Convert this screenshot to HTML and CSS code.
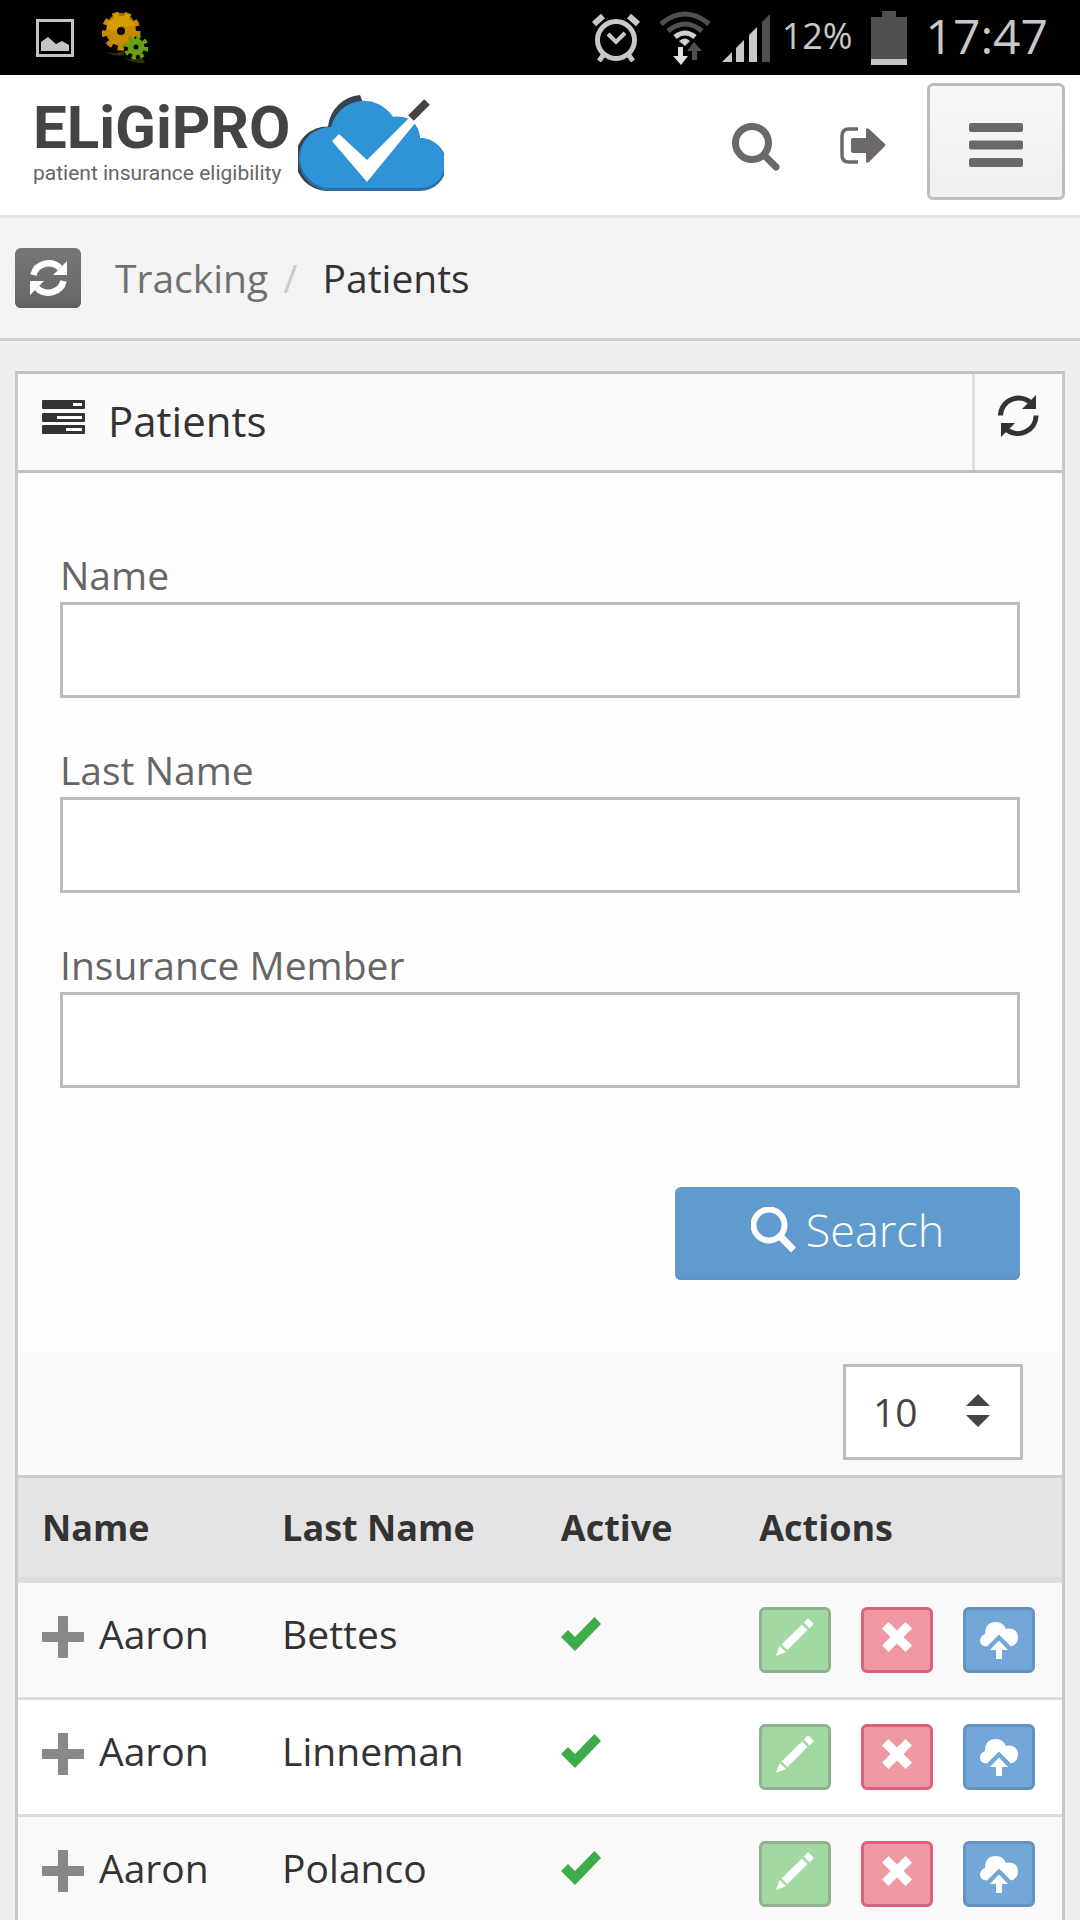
FILE: index.html
```html
<!DOCTYPE html>
<html lang="en">
<head>
<meta charset="utf-8">
<meta name="viewport" content="width=device-width, initial-scale=1">
<title>Patients - EligiPro</title>
<link rel="stylesheet" href="styles.css">
</head>
<body>
<svg class="sprite" aria-hidden="true">
  <symbol id="i-plus" viewBox="0 0 42 48"><path d="M17 6h8q1 0 1 1v15h15q1 0 1 1v8q0 1-1 1H26v15q0 1-1 1h-8q-1 0-1-1V32H1q-1 0-1-1v-8q0-1 1-1h15V7q0-1 1-1z"/></symbol>
  <symbol id="i-check" viewBox="0 0 41 34"><path d="M0 20l7-7 7 7L33.500 0 40 7 14 34z"/></symbol>
  <symbol id="i-pencil" viewBox="0 0 38 38"><path d="M0 38l3.500-10 6.500 6zM5.500 26.500L26 6.500 31.500 12 11.500 32zM28 4.500l3-3.500q1-1 2 0l4 4q1 1 0 2l-3.500 3.500z"/></symbol>
  <symbol id="i-cross" viewBox="0 0 30 30"><path d="M6.500 0L15 8.500 23.500 0 30 6.500 21.500 15 30 23.500 23.500 30 15 21.500 6.500 30 0 23.500 8.500 15 0 6.500z"/></symbol>
  <symbol id="i-upload" viewBox="0 0 38 37"><path d="M7 24.500l12-12 12 12q7-2 7-9 0-9-10-9-1 0-2 .5Q23 0 16 0 5 0 5 12 0 14 0 19q0 5 7 5.500z"/><path d="M19 18.500l9 9.500h-6v9h-6v-9h-6z"/></symbol>
</svg>

<div class="statusbar">
  <div class="statusbar-side">
    <svg width="38" height="38" viewBox="0 0 38 38"><path d="M1.500 1.500h35v35h-35z" fill="none" stroke="#c4c4c4" stroke-width="3"/><path d="M5 32v-9l7-5 8 7 6-3 7 4v6z" fill="#c4c4c4"/></svg>
    <svg width="46" height="54" viewBox="0 0 46 54">
      <path d="M4 41q12 3 18-2v5q-8 2-18-3zM22 47q12 3 18-1l3 6q-10 1-21-5z" fill="#2e3400"/>
      <g fill="none" stroke="#c98a00"><circle cx="19" cy="20" r="9.500" stroke-width="11"/><circle cx="19" cy="20" r="16.500" stroke-width="6" stroke-dasharray="6 5.520"/></g>
      <path d="M5 18a14 14 0 0 1 28-4l-10 2a6 6 0 0 0-9 4z" fill="#dca800" opacity=".7"/>
      <g fill="none" stroke="#6b9e12"><circle cx="34" cy="36" r="5.500" stroke-width="6"/><circle cx="34" cy="36" r="10" stroke-width="5" stroke-dasharray="4 3.850"/></g>
    </svg>
  </div>
  <div class="statusbar-side">
    <svg width="56" height="48" viewBox="0 0 56 48" fill="none" stroke="#c8c8c8"><circle cx="24" cy="26" r="18.500" stroke-width="5"/><path d="M16 20l8 8 9-9" stroke-width="4"/><path d="M2 10L11 2M46 10L37 2" stroke-width="6"/><path d="M7 47l5-7M41 47l-5-7" stroke-width="5"/></svg>
    <svg width="50" height="54" viewBox="0 0 50 54" fill="none"><path d="M1 13q24-20 48 0M8 20q17-14 34 0" stroke="#505050" stroke-width="5"/><path d="M15 26q10-8 20 0" stroke="#d0d0d0" stroke-width="5"/><path d="M19 30q6-5 11 0l-5 5z" fill="#d0d0d0"/><path d="M34 31l8 9h-5v9h-5v-9h-5z" fill="#505050"/><path d="M18 36h5v9h5l-7 9-8-9h5z" fill="#e0e0e0"/></svg>
    <svg width="48" height="48" viewBox="0 0 48 48"><path d="M0 48l10-10v10zM14 34l8-8v22h-8zM27 21l8-8v35h-8z" fill="#c8c8c8"/><path d="M40 8l8-8v48h-8z" fill="#505050"/></svg>
    <span class="battery-level">12%</span>
    <svg width="40" height="54" viewBox="0 0 40 54"><path d="M3 6h11V0h14v6h11v42H3z" fill="#505050"/><path d="M3 48h36v6H3z" fill="#c4c4c4"/></svg>
    <span class="clock">17:47</span>
  </div>
</div>

<header class="topbar">
  <a class="logo" href="#">
    <span class="logo-text"><span class="logo-name">ELiGiPRO</span><span class="logo-tag">patient insurance eligibility</span></span>
    <svg width="146" height="97" viewBox="0 0 146 97">
      <path d="M29 96A31 31 0 0 1 30 31.500 35 35 0 0 1 62 0L100 96z" fill="#35434e"/>
      <path d="M32 96A31 31 0 0 1 33 32 35 35 0 0 1 95 22Q119 20 122 43A26 26 0 0 1 122 96z" fill="#2c6fa6"/>
      <path d="M32 93A30 30 0 0 1 33 32 34 34 0 0 1 95 22Q119 20 122 43A25 25 0 0 1 122 93z" fill="#2f94d6"/>
      <path d="M34 46l7-7 28 26 43-43 6 5-49 60z" fill="#fff"/>
      <path d="M113 23L129 7" stroke="#4a4040" stroke-width="8"/>
    </svg>
  </a>
  <nav class="topbar-actions">
    <a class="find-link" href="#" aria-label="Search"><svg width="48" height="48" viewBox="0 0 48 48" fill="none" stroke="#6c6868"><circle cx="20" cy="20" r="16.500" stroke-width="7"/><path d="M32 32l12 12" stroke-width="7" stroke-linecap="round"/></svg></a>
    <a class="exit-link" href="#" aria-label="Sign out"><svg width="46" height="38" viewBox="0 0 46 38"><path d="M18 2H9q-7 0-7 7v19q0 7 7 7h9" fill="none" stroke="#6c6868" stroke-width="3.500"/><path d="M13 11h13V3q0-3 3-1l16 15q1 1 0 2L29 35q-3 2-3-1v-8H13q-2 0-2-2V13q0-2 2-2z" fill="#6c6868"/></svg></a>
    <button class="menu-btn" type="button" aria-label="Menu"><svg width="54" height="44" viewBox="0 0 54 44" fill="#6c6868"><rect width="54" height="9" rx="2"/><rect y="17.500" width="54" height="9" rx="2"/><rect y="35" width="54" height="9" rx="2"/></svg></button>
  </nav>
</header>

<div class="ribbon">
  <button class="reset-btn" type="button" aria-label="Reset"><svg width="37" height="38" viewBox="0 0 37 38"><path d="M3.500 16A15.500 14.500 0 0 1 30 9M33.500 22A15.500 14.500 0 0 1 7 29" fill="none" stroke="#fff" stroke-width="6.500"/><path d="M37 2v14H23zM0 36V22h14z" fill="#fff"/></svg></button>
  <nav class="breadcrumb" aria-label="Breadcrumb">
    <a href="#">Tracking</a><span class="slash">/</span><span>Patients</span>
  </nav>
</div>

<main class="content">
  <section class="panel">
    <div class="panel-head">
      <svg width="43" height="44" viewBox="0 0 43 44"><g fill="#333"><rect width="43" height="9" rx="1"/><rect y="13" width="43" height="9" rx="1"/><rect y="25" width="43" height="9" rx="1"/></g><path d="M31 3h9v3h-9zM15 16h25v3H15zM24 28h16v3H24z" fill="#fff"/></svg>
      <h1 class="panel-title">Patients</h1>
      <button class="panel-refresh" type="button" aria-label="Refresh"><svg width="41" height="54" viewBox="0 0 41 54"><path d="M2.500 20.500A18 17.500 0 0 1 33 8M38 20.500A18 17.500 0 0 1 8 34" fill="none" stroke="#333" stroke-width="5"/><path d="M38 0v14H24zM3 42V28h14z" fill="#333"/></svg></button>
    </div>

    <form class="filters">
      <div class="field"><label for="name">Name</label><input id="name" type="text"></div>
      <div class="field"><label for="last-name">Last Name</label><input id="last-name" type="text"></div>
      <div class="field"><label for="member">Insurance Member</label><input id="member" type="text"></div>
      <button class="search-btn" type="button"><svg width="45" height="46" viewBox="0 0 45 46" fill="none" stroke="#fff"><circle cx="18" cy="18" r="15.500" stroke-width="6"/><path d="M29 29l13.500 14" stroke-width="7"/></svg>Search</button>
    </form>

    <div class="toolbar">
      <div class="page-size">
        <select aria-label="Rows per page"><option>10</option><option>25</option><option>50</option></select>
        <svg class="page-size-arrows" width="24" height="33" viewBox="0 0 24 33" fill="#444"><path d="M12 0l12 12H0zM12 33L0 21h24z"/></svg>
      </div>
    </div>

    <table class="patients">
      <colgroup><col class="col-name"><col class="col-last"><col class="col-active"><col></colgroup>
      <thead><tr><th scope="col">Name</th><th scope="col">Last Name</th><th scope="col">Active</th><th scope="col">Actions</th></tr></thead>
      <tbody>
        <tr>
          <td><div class="cell"><svg class="plus"><use href="#i-plus"/></svg>Aaron</div></td>
          <td>Bettes</td>
          <td><div class="cell"><svg class="check"><use href="#i-check"/></svg></div></td>
          <td><div class="actions">
            <button class="act edit" type="button" aria-label="Edit"><svg width="38" height="38"><use href="#i-pencil"/></svg></button>
            <button class="act remove" type="button" aria-label="Delete"><svg width="30" height="30"><use href="#i-cross"/></svg></button>
            <button class="act upload" type="button" aria-label="Upload"><svg width="38" height="37"><use href="#i-upload"/></svg></button>
          </div></td>
        </tr>
        <tr>
          <td><div class="cell"><svg class="plus"><use href="#i-plus"/></svg>Aaron</div></td>
          <td>Linneman</td>
          <td><div class="cell"><svg class="check"><use href="#i-check"/></svg></div></td>
          <td><div class="actions">
            <button class="act edit" type="button" aria-label="Edit"><svg width="38" height="38"><use href="#i-pencil"/></svg></button>
            <button class="act remove" type="button" aria-label="Delete"><svg width="30" height="30"><use href="#i-cross"/></svg></button>
            <button class="act upload" type="button" aria-label="Upload"><svg width="38" height="37"><use href="#i-upload"/></svg></button>
          </div></td>
        </tr>
        <tr>
          <td><div class="cell"><svg class="plus"><use href="#i-plus"/></svg>Aaron</div></td>
          <td>Polanco</td>
          <td><div class="cell"><svg class="check"><use href="#i-check"/></svg></div></td>
          <td><div class="actions">
            <button class="act edit" type="button" aria-label="Edit"><svg width="38" height="38"><use href="#i-pencil"/></svg></button>
            <button class="act remove" type="button" aria-label="Delete"><svg width="30" height="30"><use href="#i-cross"/></svg></button>
            <button class="act upload" type="button" aria-label="Upload"><svg width="38" height="37"><use href="#i-upload"/></svg></button>
          </div></td>
        </tr>
      </tbody>
    </table>
  </section>
</main>
</body>
</html>
```
FILE: styles.css
```css
* { box-sizing: border-box; }

body {
  margin: 0;
  background: #efefef;
  color: #333;
  font-family: "Open Sans", "Noto Sans", sans-serif;
  font-size: 39px;
  line-height: 54px;
}

button, input, select { font: inherit; color: inherit; margin: 0; }
button { cursor: pointer; padding: 0; }
a { color: inherit; text-decoration: none; }
svg { display: block; flex: none; }
.sprite { position: absolute; width: 0; height: 0; }

/* Device status bar */
.statusbar {
  display: flex;
  justify-content: space-between;
  height: 75px;
  padding: 0 32px 0 36px;
  background: #000;
  color: #c8c8c8;
}
.statusbar-side { display: flex; align-items: center; gap: 12px; }
.statusbar-side:first-child { gap: 28px; }
.battery-level { padding: 0 3px 3px 0; font-size: 36px; }
.clock { padding: 0 0 3px 6px; font-size: 48px; }

/* Header */
.topbar {
  display: flex;
  justify-content: space-between;
  align-items: center;
  height: 143px;
  padding: 0 15px 0 33px;
  background: #fff;
  border-bottom: 3px solid #e5e5e5;
}
.logo { display: flex; align-items: center; gap: 11px; margin-bottom: 4px; color: #444; }
.logo-text { display: flex; flex-direction: column; width: 254px; white-space: nowrap; font-family: Roboto, "Open Sans", sans-serif; }
.logo-name { font-size: 60px; line-height: 60px; font-weight: 700; }
.logo-tag { font-size: 21px; line-height: 30px; color: #666; }
.topbar-actions { display: flex; align-items: center; }
.find-link { margin-right: 60px; padding-top: 4px; }
.exit-link { margin-right: 41px; padding-top: 2px; }
.menu-btn {
  display: grid;
  place-items: center;
  width: 138px;
  height: 117px;
  margin-bottom: 7px;
  padding-top: 7px;
  border: 3px solid #bdbdbd;
  border-radius: 6px;
  background: linear-gradient(#f8f8f8, #f0f0f0);
}

/* Ribbon */
.ribbon {
  display: flex;
  align-items: center;
  gap: 34px;
  height: 123px;
  padding: 0 15px;
  background: #f4f4f4;
  border-bottom: 3px solid #cfcfcf;
}
.reset-btn {
  display: grid;
  place-items: center;
  width: 66px;
  height: 60px;
  border: 0;
  border-radius: 6px;
  background: linear-gradient(#777, #666);
  box-shadow: inset 0 -6px 3px -2px #5f5f5f;
}
.breadcrumb { display: flex; }
.breadcrumb a { color: #707070; }
.slash { color: #ccc; padding: 0 25px 0 15px; }

/* Panel */
.content { padding: 30px 15px; }
.panel { border: 3px solid #c9c9c9; border-top-color: #c0c0c0; background: #fefefe; }
.panel-head {
  display: flex;
  align-items: center;
  height: 99px;
  padding-left: 24px;
  background: #fafafa;
  border-bottom: 3px solid #c0c0c0;
}
.panel-title { flex: 1; margin: 0; padding: 0 0 2px 23px; font-size: 42px; font-weight: 400; }
.panel-refresh {
  display: grid;
  place-items: center;
  align-self: stretch;
  width: 90px;
  border: 0;
  border-left: 3px solid #e0e0e0;
  background: none;
}

/* Filter form */
.filters { display: flex; flex-direction: column; gap: 45px; padding: 75px 42px 72px; }
.field { display: flex; flex-direction: column; }
.field label { color: #666; }
.field input {
  width: 100%;
  height: 96px;
  padding: 0 24px;
  border: 3px solid #bdbdbd;
  border-radius: 0;
  background: #fff;
}
.search-btn {
  display: flex;
  align-items: center;
  justify-content: center;
  align-self: flex-end;
  gap: 10px;
  width: 345px;
  height: 93px;
  margin-top: 54px;
  padding-bottom: 8px;
  border: 0;
  border-radius: 6px;
  background: #5f9bcf;
  box-shadow: inset 0 -6px 3px -2px #5a94c8;
  color: #fff;
  font-size: 45px;
  font-weight: 300;
}

/* Table */
.toolbar { display: flex; justify-content: flex-end; padding: 12px 39px 15px; background: #fafafa; }
.page-size { position: relative; }
.page-size select {
  display: block;
  width: 180px;
  height: 96px;
  padding: 0 27px;
  border: 3px solid #bdbdbd;
  border-radius: 0;
  background: #fff;
  color: #444;
  appearance: none;
}
.page-size-arrows { position: absolute; top: 30px; right: 33px; pointer-events: none; }

.patients { width: 100%; table-layout: fixed; border-collapse: separate; border-spacing: 0; border-top: 3px solid #ccc; }
.col-name { width: 23%; }
.col-last { width: 26.7%; }
.col-active { width: 19%; }
.patients th {
  height: 105px;
  padding: 0 0 0 24px;
  background: #e4e4e4;
  border-bottom: 6px solid #dcdcdc;
  font-size: 36px;
  font-weight: 700;
  text-align: left;
}
.patients td { padding: 24px 0 24px 24px; border-bottom: 3px solid #dcdcdc; background: #fff; vertical-align: top; }
.patients tbody tr:nth-child(odd) td { background: #f9f9f9; }
.cell { display: flex; align-items: center; gap: 15px; height: 54px; }
.plus { width: 42px; height: 48px; fill: #888; }
.check { width: 41px; height: 34px; fill: #3fac4a; }
.actions { display: flex; gap: 30px; }
.act {
  display: grid;
  place-items: center;
  width: 72px;
  height: 66px;
  border: 3px solid;
  border-radius: 6px;
  fill: #fff;
}
.edit { padding-bottom: 6px; background: #a2d9a2; border-color: #90b290; }
.remove { padding-bottom: 6px; background: #f098a2; border-color: #db607c; }
.upload { background: #72a7d7; border-color: #6593bd; }
```
